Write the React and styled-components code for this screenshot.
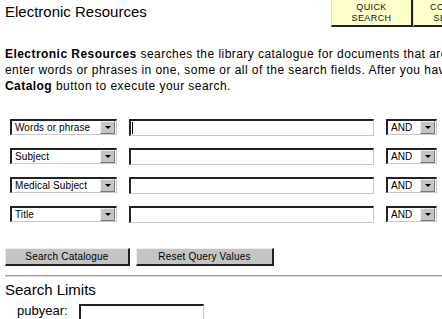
import React from "react";
import styled, { createGlobalStyle } from "styled-components";

const Global = createGlobalStyle`
  html, body { margin: 0; padding: 0; background: #fff; overflow: hidden; }
  body { font-family: "Liberation Sans", Arial, sans-serif; color: #000; }
`;

const Page = styled.div`
  width: 680px;
  padding: 0 0 0 5px;
`;

const Header = styled.div`
  display: flex;
  align-items: flex-start;
`;

const Title = styled.h1`
  margin: 3px 0 0;
  width: 326px;
  font-size: 15px;
  font-weight: normal;
  line-height: 17px;
`;

const Tabs = styled.div`
  display: flex;
`;

const Tab = styled.div`
  width: 79px;
  height: 24px;
  background: #ffffcc;
  border-left: 1px solid #e0e0c0;
  border-right: 2px solid #222;
  border-bottom: 2px solid #222;
  display: flex;
  flex-direction: column;
  align-items: center;
  justify-content: center;
  font-size: 9px;
  line-height: 11px;
  letter-spacing: 0.4px;
  color: #111;
  padding-top: 1px;
`;

const Intro = styled.p`
  margin: 19px 0 0;
  font-size: 12px;
  line-height: 16px;
  white-space: nowrap;
  letter-spacing: 0.45px;
`;

const Rows = styled.div`
  margin: 25px 0 0 5px;
  display: flex;
  flex-direction: column;
  gap: 13px;
`;

const Row = styled.div`
  display: flex;
  align-items: center;
  gap: 12px;
  height: 16px;
`;

const Select = styled.div`
  box-sizing: border-box;
  width: ${(p) => p.$w}px;
  height: 16px;
  display: flex;
  align-items: stretch;
  border-top: 2px solid #222;
  border-left: 2px solid #222;
  border-right: 1px solid #c8c8c8;
  border-bottom: 1px solid #c8c8c8;
  background: #fff;
`;

const SelectText = styled.span`
  flex: 1;
  font-size: 10px;
  line-height: 13px;
  padding-left: 3px;
  letter-spacing: 0.1px;
  white-space: nowrap;
  overflow: hidden;
`;

const Arrow = styled.span`
  width: 13px;
  margin: 0 1px 0 0;
  background: #c4c4c4;
  border-top: 1px solid #eee;
  border-left: 1px solid #eee;
  border-right: 1px solid #777;
  border-bottom: 1px solid #777;
  display: flex;
  align-items: center;
  justify-content: center;
  &::after {
    content: "";
    border-left: 3px solid transparent;
    border-right: 3px solid transparent;
    border-top: 3px solid #000;
  }
`;

const TextInput = styled.div`
  box-sizing: border-box;
  width: 245px;
  height: 17px;
  border-top: 2px solid #222;
  border-left: 2px solid #222;
  border-right: 1px solid #c8c8c8;
  border-bottom: 1px solid #c8c8c8;
  background: #fff;
  position: relative;
`;

const Caret = styled.span`
  position: absolute;
  left: 1px;
  top: 1px;
  width: 1px;
  height: 12px;
  background: #000;
`;

const Buttons = styled.div`
  margin-top: 26px;
  display: flex;
  gap: 6px;
`;

const Button = styled.button`
  box-sizing: border-box;
  width: ${(p) => p.$w}px;
  height: 18px;
  background: #c4c4c4;
  border-top: 1px solid #eee;
  border-left: 1px solid #eee;
  border-right: 2px solid #222;
  border-bottom: 2px solid #222;
  font-family: "Liberation Sans", Arial, sans-serif;
  font-size: 10px;
  letter-spacing: 0.2px;
  color: #000;
  padding: 0;
  line-height: 14px;
`;

const Rule = styled.hr`
  margin: 9px 0 0;
  border: 0;
  border-top: 1px solid #999;
  border-bottom: 1px solid #ddd;
  height: 0;
`;

const Section = styled.h2`
  margin: 4px 0 0;
  font-size: 15px;
  font-weight: normal;
  line-height: 17px;
`;

const LimitRow = styled.div`
  margin: 5px 0 0 12px;
  display: flex;
  align-items: flex-start;
  gap: 12px;
  font-size: 13px;
`;

const LimitLabel = styled.span`
  width: 50px;
  line-height: 16px;
`;

const LimitInput = styled.div`
  box-sizing: border-box;
  width: 125px;
  height: 20px;
  border-top: 2px solid #222;
  border-left: 2px solid #222;
  border-right: 1px solid #c8c8c8;
  border-bottom: 1px solid #c8c8c8;
  margin-top: 1px;
`;

const fields = ["Words or phrase", "Subject", "Medical Subject", "Title"];

export default function App() {
  return (
    <>
      <Global />
      <Page>
        <Header>
          <Title>Electronic Resources</Title>
          <Tabs>
            <Tab>
              <span>QUICK</span>
              <span>SEARCH</span>
            </Tab>
            <Tab>
              <span>COMPLEX</span>
              <span>SEARCH</span>
            </Tab>
          </Tabs>
        </Header>
        <Intro>
          <b>Electronic Resources</b> searches the library catalogue for documents that are relevant to your query. To search,
          <br />
          enter words or phrases in one, some or all of the search fields. After you have entered your terms, click the <b>Search</b>
          <br />
          <b>Catalog</b> button to execute your search.
        </Intro>
        <Rows>
          {fields.map((f, i) => (
            <Row key={f}>
              <Select $w={107}>
                <SelectText>{f}</SelectText>
                <Arrow />
              </Select>
              <TextInput>{i === 0 && <Caret />}</TextInput>
              <Select $w={51}>
                <SelectText>AND</SelectText>
                <Arrow />
              </Select>
            </Row>
          ))}
        </Rows>
        <Buttons>
          <Button $w={125}>Search Catalogue</Button>
          <Button $w={138}>Reset Query Values</Button>
        </Buttons>
        <Rule />
        <Section>Search Limits</Section>
        <LimitRow>
          <LimitLabel>pubyear:</LimitLabel>
          <LimitInput />
        </LimitRow>
      </Page>
    </>
  );
}
